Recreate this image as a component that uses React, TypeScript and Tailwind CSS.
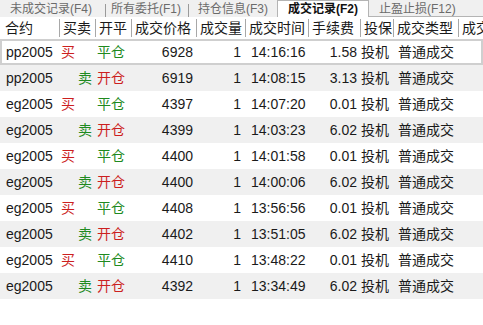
import React from "react";

type Trade = {
    code: string;
    side: "买" | "卖";
    offset: "开仓" | "平仓";
    price: string;
    qty: string;
    time: string;
    fee: string;
};

const trades: Trade[] = [
    { code: "pp2005", side: "买", offset: "平仓", price: "6928", qty: "1", time: "14:16:16", fee: "1.58" },
    { code: "pp2005", side: "卖", offset: "开仓", price: "6919", qty: "1", time: "14:08:15", fee: "3.13" },
    { code: "eg2005", side: "买", offset: "平仓", price: "4397", qty: "1", time: "14:07:20", fee: "0.01" },
    { code: "eg2005", side: "卖", offset: "开仓", price: "4399", qty: "1", time: "14:03:23", fee: "6.02" },
    { code: "eg2005", side: "买", offset: "平仓", price: "4400", qty: "1", time: "14:01:58", fee: "0.01" },
    { code: "eg2005", side: "卖", offset: "开仓", price: "4400", qty: "1", time: "14:00:06", fee: "6.02" },
    { code: "eg2005", side: "买", offset: "平仓", price: "4408", qty: "1", time: "13:56:56", fee: "0.01" },
    { code: "eg2005", side: "卖", offset: "开仓", price: "4402", qty: "1", time: "13:51:05", fee: "6.02" },
    { code: "eg2005", side: "买", offset: "平仓", price: "4410", qty: "1", time: "13:48:22", fee: "0.01" },
    { code: "eg2005", side: "卖", offset: "开仓", price: "4392", qty: "1", time: "13:34:49", fee: "6.02" },
];

const cols = "grid grid-cols-[59px_36px_36px_65px_49px_63px_52px_33px_65px_1fr]";
const headers = ["合约", "买卖", "开平", "成交价格", "成交量", "成交时间", "手续费", "投保", "成交类型", "成交"];

export default function App(): React.ReactElement {
    return (
        <div
            className="h-[325px] w-[483px] overflow-hidden bg-white text-[14px] text-[#1a1a1a]"
            style={{ fontFamily: '"Liberation Sans", "Noto Sans CJK SC", sans-serif' }}
        >
            {/* tabs */}
            <div className="flex h-[17px] items-end bg-[#f0f0f0] text-[12px] leading-none text-[#6b6b6b]">
                <div className="flex h-[17px] items-center pl-[10px]">未成交记录(F4)</div>
                <div className="ml-[13px] mr-[5px] h-[13px] w-px bg-[#9a9a9a]" />
                <div className="flex h-[17px] items-center">所有委托(F1)</div>
                <div className="ml-[7px] mr-[9px] h-[13px] w-px bg-[#9a9a9a]" />
                <div className="flex h-[17px] items-center">持仓信息(F3)</div>
                <div className="ml-[9px] flex h-[17px] w-[92px] items-center justify-center border-x border-t border-[#b4b4b4] bg-white font-bold text-[#111]">
                    成交记录(F2)
                </div>
                <div className="flex h-[15px] flex-1 items-center border-b border-[#b4b4b4] pl-[10px]">止盈止损(F12)</div>
            </div>

            {/* header */}
            <div className={`${cols} h-[22px] items-center bg-white`}>
                {headers.map((h, i) => (
                    <div
                        key={h + i}
                        className={`h-[18px] whitespace-nowrap pl-[3px] leading-[18px] ${i > 0 ? "border-l border-[#a8a8a8]" : "pl-[5px]"}`}
                    >
                        {h}
                    </div>
                ))}
            </div>

            {/* rows */}
            {trades.map((t, i) => (
                <div
                    key={i}
                    className={`${cols} h-[26px] items-center whitespace-nowrap leading-none ${i % 2 === 1 ? "bg-[#f0f0f0]" : "bg-white"} ${i === 0 ? "shadow-[inset_0_0_0_2px_#cfcfcf]" : ""}`}
                >
                    <div className="pl-[6px]">{t.code}</div>
                    <div className={`flex ${t.side === "买" ? "justify-start pl-[2px] text-[#cc1f1f]" : "justify-end pr-[3px] text-[#1f8a1f]"}`}>
                        {t.side}
                    </div>
                    <div className={`pl-[2px] ${t.offset === "开仓" ? "text-[#cc1f1f]" : "text-[#1f8a1f]"}`}>{t.offset}</div>
                    <div className="pr-[3px] text-right">{t.price}</div>
                    <div className="pr-[4px] text-right">{t.qty}</div>
                    <div className="pl-[6px]">{t.time}</div>
                    <div className="pr-[3px] text-right">{t.fee}</div>
                    <div className="pl-[1px]">投机</div>
                    <div className="pl-[5px]">普通成交</div>
                    <div />
                </div>
            ))}
        </div>
    );
}
